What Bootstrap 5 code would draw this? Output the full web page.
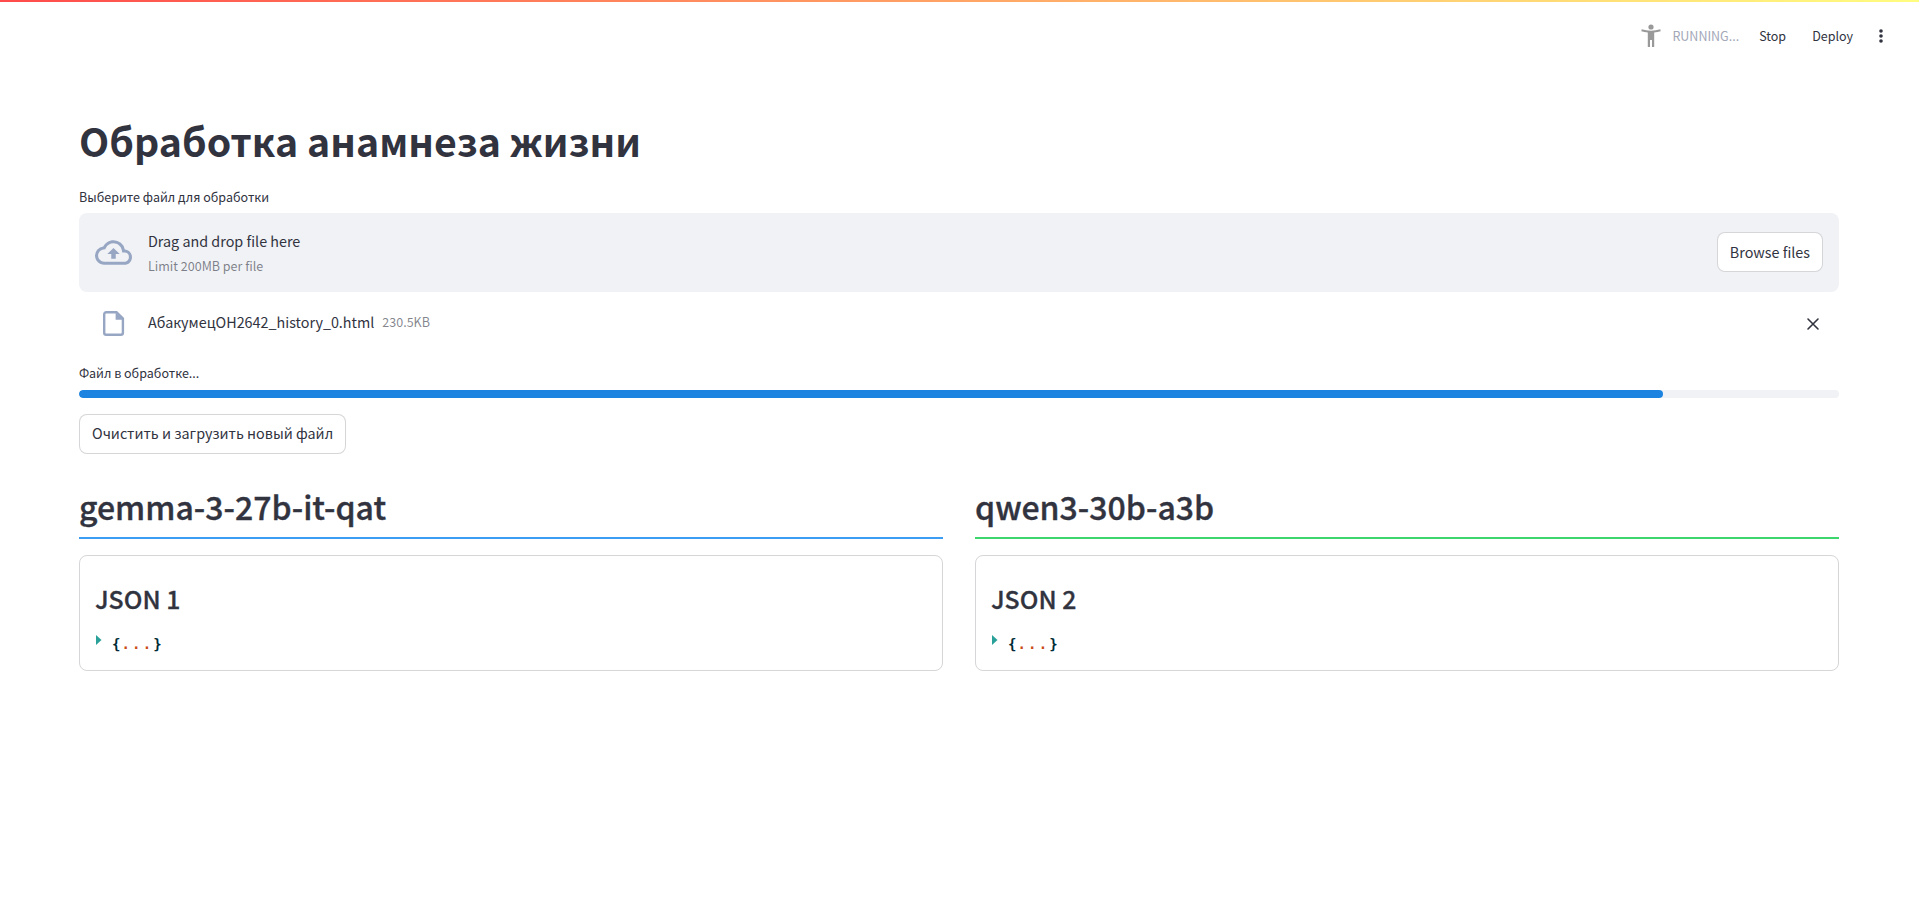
<!DOCTYPE html>
<html lang="ru">
<head>
<meta charset="utf-8">
<meta name="viewport" content="width=device-width, initial-scale=1">
<title>Обработка анамнеза жизни</title>
<link href="https://cdn.jsdelivr.net/npm/bootstrap@5.3.0/dist/css/bootstrap.min.css" rel="stylesheet">
<style>
  :root { --ink: #31333f; }
  body { font-family: "Noto Sans CJK SC", "Noto Sans", sans-serif; font-size: 14.35px; line-height: 24px; color: var(--ink); background: #fff; overflow: hidden; }
  .deco { height: 2px; background: linear-gradient(90deg, #ff4b4b, #fffd80); }
  .app-bar { height: 68px; padding: 0 30px 0 0; font-size: 12.5px; }
  .status { color: #a3a8b8; }
  .page-body { padding: 43px 80px 0 79px; }
  .page-title { font-size: 39.25px; font-weight: 700; line-height: 53px; margin: 0; }
  .field-label { font-size: 12.53px; line-height: 20px; }
  .upload-label { margin: 21px 0 6px; }
  .progress-label { margin: 7px 0; }
  .dropzone { height: 79px; background: #f0f2f6; border-radius: 8px; padding: 0 16px 1px; }
  .drop-hint { padding-top: 1px; }
  .drop-hint .muted-sm { padding-top: 3px; }
  .muted-sm { font-size: 12.53px; line-height: 20px; color: rgba(49,51,63,.6); }
  .icon-tone { color: #97a6c3; }
  .after-icon { margin-left: 17px; }
  .btn-plain { height: 40px; border: 1px solid rgba(49,51,63,.2); border-radius: 8px; background: #fff; color: var(--ink); padding: 0 12px 2px; font-size: 14.35px; line-height: 24px; white-space: nowrap; display: block; }
  .dropzone .btn-plain { padding-bottom: 1px; }
  .file-row { height: 64px; padding: 0 16px 1px; }
  .file-row .file-text { padding-bottom: 3px; }
  .progress { --bs-progress-height: 8px; --bs-progress-bg: #f0f2f6; --bs-progress-bar-bg: #1c83e1; --bs-progress-border-radius: 8px; }
  .progress-bar { border-radius: 8px; }
  .model-cols { display: grid; grid-template-columns: 1fr 1fr; gap: 32px; margin-top: 31px; }
  .model-name { font-size: 32px; font-weight: 500; line-height: 43px; margin: 0; padding-bottom: 9px; -webkit-text-stroke: .35px var(--ink); }
  .rule { height: 2px; }
  .json-card { height: 116px; border: 1px solid rgba(49,51,63,.2); border-radius: 8px; padding: 25px 15px 0; }
  .json-card h3 { font-size: 24.8px; font-weight: 500; line-height: 34px; margin: 0; -webkit-text-stroke: .3px var(--ink); }
  .json-line { font: 700 14px/20px "DejaVu Sans Mono", monospace; color: #002b36; margin-top: 19px; }
  .json-line svg { margin: 0 10px 9px 1px; }
  .json-line .dots { color: #cb4b16; letter-spacing: 2.2px; margin-left: 1px; }
</style>
<script src="https://cdn.jsdelivr.net/npm/bootstrap@5.3.0/dist/js/bootstrap.bundle.min.js"></script>
</head>
<body>
<div class="deco"></div>
<header class="app-bar d-flex justify-content-end align-items-center">
  <svg width="22" height="24" viewBox="0 0 22 24" fill="#999" style="margin-right:10px"><circle cx="11" cy="3" r="2.6"/><path d="M1.700 5.300C7.500 7.200 14.500 7.200 20.300 5.300L20.700 7.300C18.500 8 16.500 8.300 14.200 8.600V23H12V16H10V23H7.800V8.600C5.500 8.300 3.500 8 1.300 7.300Z"/></svg>
  <span class="status">RUNNING...</span>
  <span style="margin-left:20px">Stop</span>
  <span style="margin-left:26px">Deploy</span>
  <svg width="16" height="16" viewBox="0 0 16 16" fill="#31333f" style="margin-left:20px"><circle cx="8" cy="3" r="1.800"/><circle cx="8" cy="8" r="1.800"/><circle cx="8" cy="13" r="1.800"/></svg>
</header>
<main class="page-body">
  <h1 class="page-title">Обработка анамнеза жизни</h1>
  <div class="field-label upload-label">Выберите файл для обработки</div>
  <section class="dropzone d-flex align-items-center">
    <svg class="icon-tone flex-shrink-0" width="37" height="37" viewBox="0 0 24 24" fill="currentColor"><path d="M19.350 10.040A7.490 7.490 0 0 0 12 4C9.110 4 6.600 5.640 5.350 8.040A5.994 5.994 0 0 0 0 14c0 3.310 2.690 6 6 6h13c2.760 0 5-2.240 5-5 0-2.640-2.050-4.780-4.650-4.960zM19 18H6c-2.210 0-4-1.790-4-4 0-2.050 1.530-3.760 3.560-3.970l1.070-.11.500-.95A5.469 5.469 0 0 1 12 6c2.620 0 4.880 1.860 5.390 4.430l.300 1.500 1.530.11A2.980 2.980 0 0 1 22 15c0 1.650-1.350 3-3 3zM8 13h2.550v3h2.900v-3H16l-4-4z"/></svg>
    <div class="drop-hint d-flex flex-column ms-3 me-auto"><div>Drag and drop file here</div><div class="muted-sm">Limit 200MB per file</div></div>
    <button class="btn-plain" type="button">Browse files</button>
  </section>
  <div class="file-row d-flex align-items-center">
    <svg class="icon-tone flex-shrink-0" width="36" height="30" viewBox="0 0 36 30" fill="none" stroke="currentColor" stroke-width="2.400"><path d="M11.200 3.200H21.500L27.900 9.600V23.700a2 2 0 0 1-2 2H11.200a2 2 0 0 1-2-2V5.200a2 2 0 0 1 2-2z"/><path d="M20.600 3.200v7.500h7.500z" fill="currentColor" stroke="none"/></svg>
    <span class="after-icon file-text">АбакумецОН2642_history_0.html</span>
    <span class="muted-sm file-text ms-2">230.5KB</span>
    <svg class="ms-auto" width="20" height="20" viewBox="0 0 20 20" stroke="#31333f" stroke-width="1.600" stroke-linecap="round"><path d="M5 5l10 10M15 5L5 15"/></svg>
  </div>
  <div class="field-label progress-label">Файл в обработке...</div>
  <div class="progress"><div class="progress-bar" style="width:90%"></div></div>
  <button class="btn-plain mt-3" type="button">Очистить и загрузить новый файл</button>
  <div class="model-cols">
    <section>
      <h2 class="model-name">gemma-3-27b-it-qat</h2>
      <div class="rule" style="background:#3d9df3"></div>
      <div class="json-card mt-3"><h3>JSON 1</h3><div class="json-line d-flex align-items-center"><svg width="6" height="10" viewBox="0 0 6 10" fill="#2aa198"><path d="M0 0L5.500 5L0 10Z"/></svg>{<span class="dots">...</span>}</div></div>
    </section>
    <section>
      <h2 class="model-name">qwen3-30b-a3b</h2>
      <div class="rule" style="background:#3dd56d"></div>
      <div class="json-card mt-3"><h3>JSON 2</h3><div class="json-line d-flex align-items-center"><svg width="6" height="10" viewBox="0 0 6 10" fill="#2aa198"><path d="M0 0L5.500 5L0 10Z"/></svg>{<span class="dots">...</span>}</div></div>
    </section>
  </div>
</main>
</body>
</html>
